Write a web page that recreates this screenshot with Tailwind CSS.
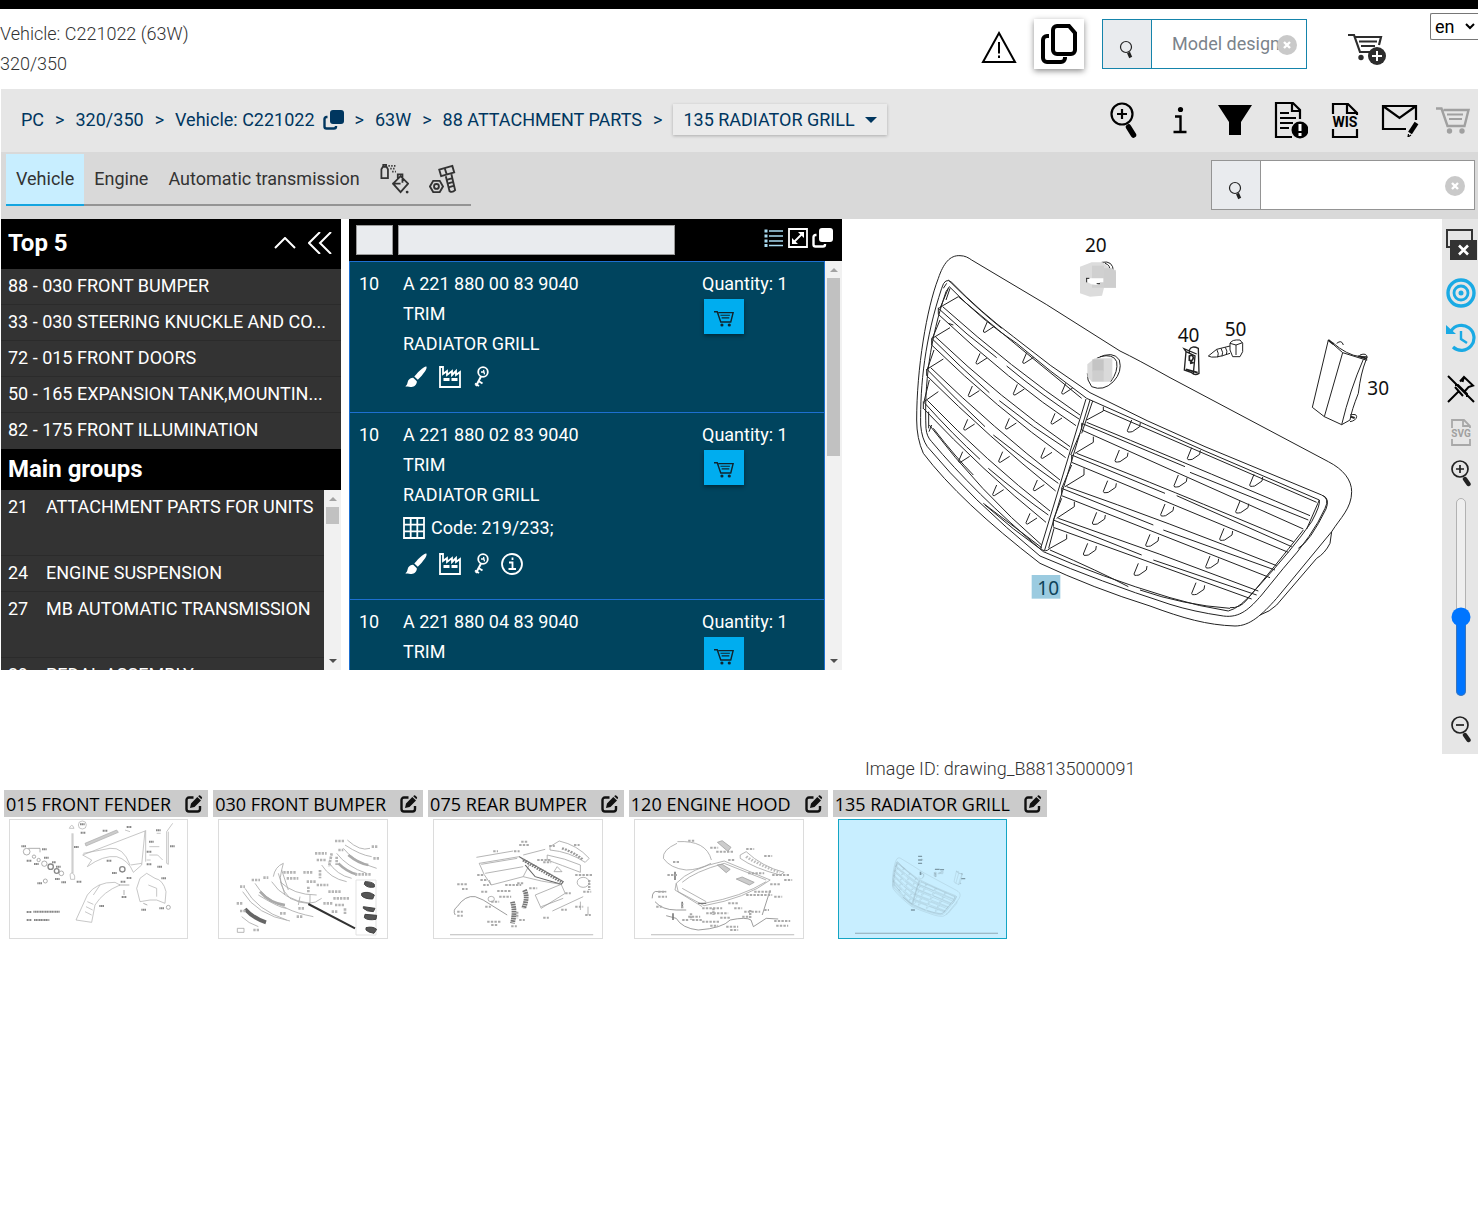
<!DOCTYPE html>
<html lang="en">
<head>
<meta charset="utf-8">
<meta name="viewport" content="width=device-width, initial-scale=1">
<title>Parts catalogue - 135 Radiator grill</title>
<script src="https://cdn.jsdelivr.net/npm/@tailwindcss/browser@4"></script>
</head>
<body class="bg-white text-[#333] text-[18px] leading-[30px] font-['Roboto','Liberation_Sans',sans-serif] overflow-x-hidden">

<svg class="hidden" aria-hidden="true">
  <symbol id="i-search" viewBox="0 0 16 20"><circle cx="7" cy="7" r="5.5" fill="none" stroke="#222" stroke-width="1.2"/><path d="M9.5 12.500l2.200 5" stroke="#222" stroke-width="3.200" /></symbol>
  <symbol id="i-clear" viewBox="0 0 20 20"><circle cx="10" cy="10" r="10" fill="#c9c9c9"/><path d="M7 7l6 6M13 7l-6 6" stroke="#fff" stroke-width="2.400"/></symbol>
  <symbol id="i-cart" viewBox="0 0 34 28"><path d="M0 2.500h5.500l6 17.500h17l4-16H7.500" fill="none" stroke="currentColor" stroke-width="2.400"/><path d="M11 8.500h16M13 13h13" stroke="currentColor" stroke-width="2"/><circle cx="13.500" cy="25" r="2.700" fill="currentColor"/><circle cx="26" cy="25" r="2.700" fill="currentColor"/></symbol>
  <symbol id="i-copy" viewBox="0 0 21 20"><rect x="7" y="0" width="14" height="14" rx="3" fill="currentColor"/><path d="M4.500 7H3.500a2 2 0 0 0-2 2v7.500a2 2 0 0 0 2 2H11a2 2 0 0 0 2-2V16" fill="none" stroke="currentColor" stroke-width="2.400"/></symbol>
  <symbol id="i-brush" viewBox="0 0 22 22"><path d="M21.300.600c.8.800-.2 3.200-1.600 5.200-2 2.900-4.300 5.600-6.900 8L9.300 10.600c2.500-2.900 4.900-5.700 7.600-7.800C18.700 1.200 20.700 0 21.300.6zM8.200 11.700l3.600 3.500c.3 2.700-2 5.500-5.300 5.700-2.500.1-4.800-.2-6.300-.6 2.600-1.400 1.900-3.200 3-5.700 1.100-2 3-3 5-2.900z" fill="#fff"/></symbol>
  <symbol id="i-factory" viewBox="0 0 22 22"><path d="M1 21V1h3v7l4-3v4l5-4v4l4-4v4l4-3v15z" fill="none" stroke="#fff" stroke-width="1.800"/><path d="M4.500 13.500h6M12.500 13.500h6" stroke="#fff" stroke-width="3"/></symbol>
  <symbol id="i-key" viewBox="0 0 16 22"><circle cx="10" cy="6" r="4.800" fill="none" stroke="#fff" stroke-width="1.800"/><path d="M8 6h3.500M10.500 3.800l1 4.500" stroke="#fff" stroke-width="1.300"/><path d="M8 10.500L3 20M5.500 15l4 2.500M2 17.500l4 2.500" stroke="#fff" stroke-width="2"/></symbol>
  <symbol id="i-edit" viewBox="0 0 18 18"><path d="M8.500 2.500H4a2.500 2.500 0 0 0-2.500 2.500v9A2.500 2.500 0 0 0 4 16.500h8.500A2.500 2.500 0 0 0 15 14v-3" fill="none" stroke="#111" stroke-width="2.400"/><path d="M5 13l1-4.500L12.300 2l3.700 3.500-6.500 6.500zM13.200 1.200l1-.9c.6-.5 3.400 1.900 2.900 2.700l-.8 1.200z" fill="#111"/></symbol>
  <symbol id="i-up" viewBox="0 0 8 4"><path d="M0 4l4-4 4 4z" fill="#a3a3a3"/></symbol>
  <symbol id="i-down" viewBox="0 0 8 4"><path d="M0 0l4 4 4-4z" fill="#505050"/></symbol>
</svg>

<div class="h-[9px] bg-black"></div>

<header class="flex h-20 items-start">
  <p class="pt-[10px] font-light">Vehicle: C221022 (63W)<br>320/350</p>
  <div class="ml-auto flex items-start">
    <button aria-label="Warnings" class="mt-[21px] mr-[17px]">
      <svg class="h-[34px] w-9" viewBox="0 0 36 34" fill="none" stroke="#000" stroke-width="2"><path d="M18 3L34 32H2z"/><path d="M18 12v11.500M18 25.500v2.500"/></svg>
    </button>
    <button aria-label="Copy" class="mt-[10px] mr-[18px] flex size-[50px] items-center justify-center bg-white shadow-[0_2px_6px_rgba(0,0,0,0.45)]">
      <svg class="h-10 w-9" viewBox="0 0 36 40" fill="none" stroke="#000" stroke-width="4"><path d="M16 2h12l6 7v17a4 4 0 0 1-4 4H16a4 4 0 0 1-4-4V6a4 4 0 0 1 4-4z"/><path d="M8 12H6a4 4 0 0 0-4 4v18a4 4 0 0 0 4 4h14a4 4 0 0 0 4-4v-1"/></svg>
    </button>
    <form class="relative mt-[10px] mr-[41px] flex h-[50px] w-[205px] border border-[#1584ab]">
      <button type="button" aria-label="Search model" class="flex w-[49px] items-center justify-center border-r border-[#1584ab] bg-[#e9ebee] pt-3"><svg class="h-5 w-4"><use href="#i-search"/></svg></button>
      <input aria-label="Model designation" placeholder="Model designation" class="min-w-0 flex-1 bg-white pr-6 pl-5 outline-none placeholder:text-[#7b838b]">
      <button type="button" aria-label="Clear" class="absolute top-[15px] right-[9px]"><svg class="size-5"><use href="#i-clear"/></svg></button>
    </form>
    <button aria-label="Add to cart" class="mt-6 mr-11">
      <svg class="h-8 w-[38px]" viewBox="0 0 38 32" fill="none" stroke="#2d2d2d" stroke-width="2.200"><path d="M0 2h6l6 17h12M7.500 4H33l-2 8"/><path d="M11 8.500h18M13 13h14" stroke-width="1.800"/><circle cx="13" cy="24.500" r="2.700" fill="#2d2d2d" stroke="none"/><circle cx="29" cy="23" r="9" fill="#2d2d2d" stroke="none"/><path d="M29 18v10M24 23h10" stroke="#fff" stroke-width="2"/></svg>
    </button>
    <select aria-label="Language" class="mt-1 h-[27px] w-12 rounded-l-xs border border-r-0 border-[#767676] bg-white leading-6 text-black"><option>en</option></select>
  </div>
</header>

<div class="pl-px">
  <nav aria-label="Breadcrumb" class="flex h-[63px] items-center bg-[#e6e6e6] pb-[2px] text-[#00365f]">
    <ol class="flex items-center gap-[11px] pl-5 whitespace-nowrap">
      <li><a href="#">PC</a></li><li aria-hidden="true">&gt;</li>
      <li><a href="#">320/350</a></li><li aria-hidden="true">&gt;</li>
      <li class="flex items-center gap-2"><a href="#">Vehicle: C221022</a><button aria-label="Copy vehicle"><svg class="h-5 w-[21px]"><use href="#i-copy"/></svg></button></li><li aria-hidden="true">&gt;</li>
      <li><a href="#">63W</a></li><li aria-hidden="true">&gt;</li>
      <li><a href="#">88 ATTACHMENT PARTS</a></li><li aria-hidden="true">&gt;</li>
      <li><button class="flex h-[31px] items-center gap-[10px] bg-[#ebebeb] px-[10px] shadow-[0_1px_3px_rgba(0,0,0,0.25)]">135 RADIATOR GRILL <svg class="h-[6px] w-3" viewBox="0 0 12 6"><path d="M0 0h12L6 6z" fill="#00365f"/></svg></button></li>
    </ol>
    <div class="ml-auto flex items-center text-black">
      <button aria-label="Zoom" class="flex w-[55px] justify-center"><svg class="size-9" viewBox="0 0 36 36" fill="none" stroke="#000"><circle cx="15" cy="12" r="10.500" stroke-width="2.200"/><path d="M15 7v10M10 12h10" stroke-width="2.200"/><path d="M21.500 25l5 8" stroke-width="5.500" stroke-linecap="round"/></svg></button>
      <button aria-label="Information" class="flex w-[55px] justify-center"><svg class="h-7 w-4" viewBox="0 0 16 28"><circle cx="8.500" cy="3.500" r="2.600"/><path d="M3 10.500h5.500V26M1.500 26h13" fill="none" stroke="#000" stroke-width="2.400"/></svg></button>
      <button aria-label="Filter" class="flex w-[55px] justify-center"><svg class="h-[30px] w-9" viewBox="0 0 36 30"><path d="M1 0h34L24 17v13H12V17z"/></svg></button>
      <button aria-label="Notes" class="flex w-[55px] justify-center"><svg class="h-[38px] w-9" viewBox="0 0 36 38" fill="none" stroke="#000" stroke-width="2.200"><path d="M20 36H4V2h17l7 7v9M20 2v8h8"/><path d="M8 12h9M8 17h16M8 22h13M8 27h9"/><circle cx="28" cy="29" r="8.500" fill="#000" stroke="none"/><path d="M28 23v7M28 32v3" stroke="#fff" stroke-width="3"/></svg></button>
      <button aria-label="WIS" class="flex w-[55px] justify-center"><svg class="h-9 w-[30px]" viewBox="0 0 30 36" fill="none" stroke="#000" stroke-width="2.200"><path d="M3 12V2h15l9 9v2M17 2v9h10M3 27v8h24v-8"/><text x="15" y="25" text-anchor="middle" font-family="Roboto" font-size="14" font-weight="700" fill="#000" stroke="none">WIS</text></svg></button>
      <button aria-label="Message" class="flex w-[55px] justify-center"><svg class="h-[34px] w-[38px]" viewBox="0 0 38 34" fill="none" stroke="#000" stroke-width="2.200"><path d="M25 26H2V3h33v14M2 3l16.500 12L35 3"/><path d="M35.500 20l-6.500 10" stroke-width="4.500"/><path d="M27.500 31l-.5 3 3-2" stroke-width="1.200"/></svg></button>
      <button aria-label="Cart" class="flex w-[51px] justify-center text-[#a0a0a0]"><svg class="h-7 w-[34px]"><use href="#i-cart"/></svg></button>
    </div>
  </nav>

  <div class="flex h-[67px] items-start bg-[#d9d9d9]">
    <div class="mt-[2px] ml-[5px] flex h-[52px] border-b-2 border-[#949494]">
      <button class="-mb-[2px] border-b-2 border-[#14a5e0] bg-[#c8eeff] px-[10px]">Vehicle</button>
      <button class="px-[10px]">Engine</button>
      <button class="px-[10px]">Automatic transmission</button>
      <button aria-label="Paint and supplies" class="px-[10px]"><svg class="h-[30px] w-[29px]" viewBox="0 0 31 32" fill="none" stroke="#333" stroke-width="1.900"><path d="M1.500 5.500L3 3h4l1.500 2.500V15h-7zM3.500 3V1h3v2M14 21l8-8 8 8-8 9zM19 16V11h5v9M13 21h9"/><path d="M9 2h8M11 5h6M13 8h4" stroke-dasharray="1.500 1.500"/><circle cx="29" cy="30" r="1.500" fill="#333" stroke="none"/></svg></button>
      <button aria-label="Standard parts" class="pr-[14px] pl-[10px]"><svg class="h-[30px] w-7" viewBox="0 0 30 32" fill="none" stroke="#333" stroke-width="2"><path d="M1 24l3.500-6h7l3.500 6-3.500 6h-7z"/><circle cx="8" cy="24" r="2.600"/><path d="M11 6l14-4 2 7-14 4zM17 5l2 6M18 13l4 16q3 2 6-1l-4-17M19 17l6-2M20 21l6-2M21 25l6-2"/></svg></button>
    </div>
    <form class="relative mt-2 mr-[3px] ml-auto flex h-[50px] w-[264px] border border-[#949494]">
      <button type="button" aria-label="Search" class="flex w-[49px] items-center justify-center border-r border-[#949494] bg-[#e9ebee] pt-3"><svg class="h-5 w-4"><use href="#i-search"/></svg></button>
      <input aria-label="Search parts" class="min-w-0 flex-1 bg-white pr-8 pl-5 outline-none">
      <button type="button" aria-label="Clear" class="absolute top-[15px] right-[9px]"><svg class="size-5"><use href="#i-clear"/></svg></button>
    </form>
  </div>
</div>

<main>
  <div class="flex items-start pl-px">
    <aside class="mr-2 flex h-[451px] w-[340px] shrink-0 flex-col bg-[#333] text-white">
      <div class="flex h-[50px] items-center bg-black pr-[9px] pb-[2px] pl-[7px] text-[24px] font-bold">
        <h2>Top 5</h2>
        <button aria-label="Collapse" class="mr-3 ml-auto"><svg class="h-3 w-[22px]" viewBox="0 0 22 12" fill="none" stroke="#fff" stroke-width="2"><path d="M1 11L11 1l10 10"/></svg></button>
        <button aria-label="Hide panel"><svg class="h-[22px] w-6" viewBox="0 0 24 22" fill="none" stroke="#fff" stroke-width="2"><path d="M12 0L1 11l11 11M23 0L12 11l11 11"/></svg></button>
      </div>
      <ul class="divide-y divide-[#2b2b2b] whitespace-nowrap">
        <li class="h-9 px-[7px] leading-[34px]"><a href="#">88 - 030 FRONT BUMPER</a></li>
        <li class="h-9 px-[7px] leading-[34px]"><a href="#">33 - 030 STEERING KNUCKLE AND CO...</a></li>
        <li class="h-9 px-[7px] leading-[34px]"><a href="#">72 - 015 FRONT DOORS</a></li>
        <li class="h-9 px-[7px] leading-[34px]"><a href="#">50 - 165 EXPANSION TANK,MOUNTIN...</a></li>
        <li class="h-9 px-[7px] leading-[34px]"><a href="#">82 - 175 FRONT ILLUMINATION</a></li>
      </ul>
      <h2 class="flex h-[41px] shrink-0 items-center bg-black px-[7px] pb-[2px] text-[24px] font-bold">Main groups</h2>
      <div class="flex min-h-0 flex-1">
        <ul class="flex-1 divide-y divide-[#2b2b2b] overflow-hidden leading-[34px]">
          <li class="flex h-[66px] px-[7px]"><span class="w-[38px]">21</span><a href="#">ATTACHMENT PARTS FOR UNITS</a></li>
          <li class="flex h-9 px-[7px]"><span class="w-[38px]">24</span><a href="#">ENGINE SUSPENSION</a></li>
          <li class="flex h-[66px] px-[7px]"><span class="w-[38px]">27</span><a href="#">MB AUTOMATIC TRANSMISSION</a></li>
          <li class="flex h-9 px-[7px]"><span class="w-[38px]">29</span><a href="#">PEDAL ASSEMBLY</a></li>
        </ul>
        <div class="flex w-[17px] flex-col items-center bg-[#f1f1f1] py-[7px]" aria-hidden="true">
          <svg class="h-1 w-2"><use href="#i-up"/></svg>
          <div class="mt-[6px] h-[17px] w-[13px] bg-[#c1c1c1]"></div>
          <svg class="mt-auto h-1 w-2"><use href="#i-down"/></svg>
        </div>
      </div>
    </aside>

    <section aria-label="Parts" class="flex h-[451px] w-[493px] shrink-0 flex-col">
      <div class="flex h-[42px] shrink-0 items-center bg-black pr-[9px] pl-[7px]">
        <input aria-label="Item number" class="h-[30px] w-[37px] border border-[#999] bg-[#e9ebee]">
        <input aria-label="Filter parts" class="ml-[5px] h-[30px] w-[277px] border border-[#999] bg-[#e9ebee]">
        <div class="ml-auto flex items-center gap-1 pb-1 text-white">
          <button aria-label="List view"><svg class="h-[18px] w-5" viewBox="0 0 20 18" stroke="#a9dcf2" stroke-width="1.500"><path d="M5 2h14M5 7h14M5 12h14M5 16.500h14"/><path d="M.5 2h3M.5 7h3M.5 12h3M.5 16.500h3" stroke-width="3"/></svg></button>
          <button aria-label="Expand"><svg class="h-5 w-5" viewBox="0 0 20 20" fill="none" stroke="#fff" stroke-width="1.800"><path d="M1 1h18v18H1zM5 15L15 5"/><path d="M10 4h6v6zM4 10v6h6z" fill="#fff" stroke="none"/></svg></button>
          <button aria-label="Copy list"><svg class="h-5 w-[21px]"><use href="#i-copy"/></svg></button>
        </div>
      </div>
      <div class="flex min-h-0 flex-1">
        <ul class="flex-1 overflow-hidden border-x border-[#1d6fd0] bg-[#00445e] text-white">
          <li class="flex border-t border-[#1d6fd0] pt-[7px] pb-[17px]">
            <span class="w-[53px] pl-[9px]">10</span>
            <div class="flex-1"><p>A 221 880 00 83 9040</p><p>TRIM</p><p>RADIATOR GRILL</p>
              <div class="flex h-9 items-center gap-3 pl-[2px]"><svg class="size-[22px]"><use href="#i-brush"/></svg><svg class="size-[22px]"><use href="#i-factory"/></svg><svg class="h-[22px] w-4"><use href="#i-key"/></svg></div>
            </div>
            <div class="w-[122px]"><p>Quantity: 1</p><button aria-label="Add to cart" class="ml-[2px] flex h-[35px] w-10 items-center justify-center bg-[#00adef] pt-1 text-[#10242e] shadow-[0_2px_4px_rgba(0,0,0,0.4)]"><svg class="h-[17px] w-5"><use href="#i-cart"/></svg></button></div>
          </li>
          <li class="flex border-t border-[#1d6fd0] pt-[7px] pb-[17px]">
            <span class="w-[53px] pl-[9px]">10</span>
            <div class="flex-1"><p>A 221 880 02 83 9040</p><p>TRIM</p><p>RADIATOR GRILL</p>
              <p class="flex h-9 items-center gap-[6px]"><svg class="size-[22px]" viewBox="0 0 22 22" fill="none" stroke="#fff" stroke-width="1.800"><path d="M1 1h20v20H1zM7.700 1v20M14.300 1v20M1 7.700h20M1 14.300h20"/></svg>Code: 219/233;</p>
              <div class="flex h-9 items-center gap-3 pl-[2px]"><svg class="size-[22px]"><use href="#i-brush"/></svg><svg class="size-[22px]"><use href="#i-factory"/></svg><svg class="h-[22px] w-4"><use href="#i-key"/></svg><svg class="size-[22px]" viewBox="0 0 22 22" fill="none" stroke="#fff" stroke-width="1.800"><circle cx="11" cy="11" r="10"/><path d="M8 9.500h3.500V16M7.500 16H15M11.500 4.500V7"/></svg></div>
            </div>
            <div class="w-[122px]"><p>Quantity: 1</p><button aria-label="Add to cart" class="ml-[2px] flex h-[35px] w-10 items-center justify-center bg-[#00adef] pt-1 text-[#10242e] shadow-[0_2px_4px_rgba(0,0,0,0.4)]"><svg class="h-[17px] w-5"><use href="#i-cart"/></svg></button></div>
          </li>
          <li class="flex border-t border-[#1d6fd0] pt-[7px] pb-[17px]">
            <span class="w-[53px] pl-[9px]">10</span>
            <div class="flex-1"><p>A 221 880 04 83 9040</p><p>TRIM</p></div>
            <div class="w-[122px]"><p>Quantity: 1</p><button aria-label="Add to cart" class="ml-[2px] flex h-[35px] w-10 items-center justify-center bg-[#00adef] pt-1 text-[#10242e]"><svg class="h-[17px] w-5"><use href="#i-cart"/></svg></button></div>
          </li>
        </ul>
        <div class="flex w-[17px] flex-col items-center bg-[#f1f1f1] py-[7px]" aria-hidden="true">
          <svg class="h-1 w-2"><use href="#i-up"/></svg>
          <div class="mt-[6px] h-[178px] w-[13px] bg-[#c1c1c1]"></div>
          <svg class="mt-auto h-1 w-2"><use href="#i-down"/></svg>
        </div>
      </div>
    </section>

    <figure class="min-w-0 flex-1">
      <svg class="h-[535px] w-full" viewBox="-174 -18 1800 1605" role="img" aria-label="Exploded drawing of the radiator grill">
        <defs>
          <path id="vl" d="M0 0l-12 28q0 5 5 4l28-18"/>
          <path id="vr" d="M0 0l-13 32q0 6 8 4l7-1 22-15 2-12"/>
        </defs>
        <g id="grille" fill="none" stroke="#222" stroke-width="3">
          <path d="M50 585C50 430 80 250 115 160C130 115 150 90 180 92C195 92 205 98 215 105Q440 235 660 378Q710 402 810 458L1285 710C1330 733 1355 765 1355 800C1355 850 1320 880 1295 920L1130 1120C1085 1170 1050 1203 1005 1203C920 1200 850 1180 750 1143Q580 1090 420 1015Q180 830 70 685Q50 640 50 585"/>
          <path d="M1295 920l-5 35q-15 30-40 45L1130 1140q-20 20-50 30"/>
          <path d="M62 600C60 480 75 340 125 190Q135 155 155 172Q240 260 340 335Q450 425 570 503Q740 590 915 665L1265 810Q1290 820 1275 850Q1240 930 1150 1030L1085 1110C1050 1150 1020 1180 970 1173Q880 1160 810 1138Q600 1070 420 993Q210 820 82 665Q65 640 62 600"/>
          <path d="M78 610C72 480 90 340 138 200L148 185Q250 290 350 355Q450 440 560 520Q740 600 915 678L1258 825Q1262 840 1235 890Q1180 970 1070 1090Q1020 1150 985 1158Q900 1145 810 1118Q600 1055 430 980Q220 800 95 650Q80 635 78 610"/>
          <path d="M145 165Q230 250 305 310M140 175l-10 15M1270 812q20 10 8 40Q1230 950 1195 970"/>
          <path d="M1258 825L1220 912M1210 915Q1120 1030 1040 1125Q1020 1150 990 1148"/>
          <!-- left slats -->
          <path d="M145 190L120 250M120 285L97 340M102 375L82 432M88 465L72 530M86 560V610"/>
          <path d="M128 245Q335 430 540 570M115 250Q200 330 290 398M320 423Q430 515 537 582M115 268Q330 470 528 602M115 248v20M118 248L175 215"/>
          <path d="M106 335Q300 520 510 665M95 340Q180 425 268 503M298 527Q400 610 505 675M95 360Q290 550 497 698M95 340v20M97 340L150 308"/>
          <path d="M92 428Q280 610 480 765M80 432Q170 525 255 605M280 630Q380 710 475 775M80 452Q270 640 467 798M80 432v20M82 432L130 402"/>
          <path d="M82 526Q260 710 450 858M70 530Q160 630 240 703M265 730Q360 810 445 870M70 550Q250 740 438 892M70 530v22M72 530L115 500"/>
          <path d="M88 600Q240 800 425 960M95 600l-8 20M100 610Q170 700 220 750M255 840Q340 915 425 975M250 835L425 968"/>
          <path d="M150 190l-12 35M175 215Q360 370 545 520M160 300l-15-5"/>
          <use href="#vl" x="262" y="290"/><use href="#vl" x="380" y="383"/><use href="#vl" x="497" y="475"/>
          <use href="#vl" x="240" y="385"/><use href="#vl" x="352" y="478"/><use href="#vl" x="465" y="565"/>
          <use href="#vl" x="217" y="483"/><use href="#vl" x="328" y="580"/><use href="#vl" x="435" y="668"/>
          <use href="#vl" x="203" y="583"/><use href="#vl" x="308" y="680"/><use href="#vl" x="412" y="765"/>
          <use href="#vl" x="188" y="680"/><use href="#vl" x="290" y="780"/><use href="#vl" x="390" y="865"/>
          <!-- centre bar -->
          <path d="M558 522L422 970Q435 985 450 970M570 525L434 975M578 528L545 625M540 625L512 690M515 720L485 790M485 820L460 885M462 910L446 970" />
          <!-- right slats -->
          <path d="M560 592Q800 690 1230 872M545 595L855 725M870 742L1225 885M545 615L1210 912M545 595v20M560 585L610 558V545M610 555L1250 832"/>
          <path d="M530 685Q800 790 1180 950M515 690L795 805M830 812L1175 965M515 712L1165 982M515 690v20M525 685L580 652V635"/>
          <path d="M500 785Q800 890 1130 1022M485 790L760 900M790 915L1125 1035M485 812L1110 1058M485 790v20M495 785L552 750V730"/>
          <path d="M475 880Q780 985 1075 1098M460 885L725 990M760 1005L1070 1110M460 907L1055 1122M460 885v20M470 880L523 845V830"/>
          <path d="M450 970L500 942V928M450 975Q600 1040 685 1085M720 1095Q850 1140 990 1150"/>
          <use href="#vr" x="695" y="585"/><use href="#vr" x="875" y="668"/><use href="#vr" x="1062" y="748"/>
          <use href="#vr" x="658" y="675"/><use href="#vr" x="835" y="750"/><use href="#vr" x="1020" y="828"/>
          <use href="#vr" x="623" y="767"/><use href="#vr" x="795" y="837"/><use href="#vr" x="972" y="910"/>
          <use href="#vr" x="590" y="862"/><use href="#vr" x="750" y="928"/><use href="#vr" x="930" y="993"/>
          <use href="#vr" x="563" y="955"/><use href="#vr" x="715" y="1015"/><use href="#vr" x="888" y="1073"/>
          <!-- badge seats -->
          <path d="M590 400Q640 375 658 405Q668 440 640 470Q610 500 575 485Q560 465 562 445M600 395Q640 385 650 410Q655 440 632 470M605 112Q640 105 640 140M615 115Q632 120 630 140"/>
          <!-- clip, bolt and side trim -->
          <g transform="translate(750 225)">
            <path d="M118 150Q125 135 145 145L147 220Q135 228 125 218L103 210L108 155L102 146L140 162M108 155L135 168L130 220M118 150V158" stroke-width="4"/>
            <path d="M118 168q10-5 12 5q-2 12-12 8zM120 184l8 4-8 2M108 208l35 10" stroke-width="5"/>
            <path d="M175 168L200 148L240 138M175 168Q190 178 240 160M200 148q8 12 3 24M213 145q8 12 3 24M226 142q8 12 3 22M240 130Q245 118 270 120L278 130V155L270 170H248Q236 150 240 130M240 130L258 135L278 128M258 135V165"/>
            <path d="M535 120L487 322L523 350L575 374L600 360Q605 330 625 280Q632 220 648 180L578 158L535 120M578 158L523 350M640 178Q600 270 575 374M548 128Q590 165 630 170L650 170V182M560 130q15-12 20 5M630 165q20-8 22 8M600 345q20-5 20 5q-2 12-20 15" />
            <path d="M535 120l15 12M625 168l25 8M602 350l12 4" stroke-width="6"/>
          </g>
        </g>
        <g>
          <path d="M540 125L575 112H608L632 132 648 135V188H612L606 212 570 215 540 205z" fill="#dcdcdc"/><path d="M576 122h36v66h-36z" fill="#d0d0d0"/><path d="M612 130h24l12 10v48h-36z" fill="#cecece"/>
          <path d="M560 160h50v12h-10l-8 8-18-2-14-8z" fill="#fff"/><path d="M558 160h10M560 160v12M590 176h10" fill="none" stroke="#222" stroke-width="3"/>
          <path d="M562 418l22-18h53v60l-8 10h-54l-13-16z" fill="#dadada"/><path d="M577 403h34v36h-34z" fill="#c4c4c4"/><path d="M577 436h34v33h-34z" fill="#cecece"/>
          <path d="M395 1050h86v71h-86z" fill="#9bcbe0"/>
        </g>
        <g font-family="'Noto Sans','Open Sans',sans-serif" font-size="57" fill="#111">
          <text x="555" y="82">20</text><text x="833" y="350">40</text><text x="974" y="334">50</text><text x="1402" y="511">30</text><text x="412" y="1110" fill="#0e4258">10</text>
        </g>
      </svg>
      <figcaption class="pl-[23px] font-light">Image ID: drawing_B88135000091</figcaption>
    </figure>

    <div role="toolbar" aria-label="Drawing tools" class="flex h-[535px] w-9 shrink-0 flex-col items-center bg-[#e6e6e6] pt-[10px] pl-[2px]">
      <button aria-label="Close window"><svg class="h-[31px] w-[31px]" viewBox="0 0 31 31"><path d="M1 1h25v17H1z" fill="none" stroke="#333" stroke-width="2"/><path d="M4 11h27v20H4z" fill="#333"/><path d="M13 16.500l9 9M22 16.500l-9 9" stroke="#fff" stroke-width="2.600"/></svg></button>
      <button aria-label="Target" class="mt-[18px]"><svg class="size-[30px]" viewBox="0 0 30 30" fill="none" stroke="#1aaae4"><circle cx="15" cy="15" r="13" stroke-width="3.400"/><circle cx="15" cy="15" r="7" stroke-width="2.800"/><circle cx="15" cy="15" r="2.500" fill="#1aaae4" stroke="none"/></svg></button>
      <button aria-label="History" class="mt-[15px]"><svg class="size-[30px]" viewBox="0 0 30 30" fill="none" stroke="#1aaae4" stroke-width="3.200"><path d="M5 8A12.500 12.500 0 1 1 7 24"/><path d="M15 8v8l6 4" stroke-width="2.400"/><path d="M0 2v9h10z" fill="#1aaae4" stroke="none"/></svg></button>
      <button aria-label="Unpin" class="mt-[22px]"><svg class="size-7" viewBox="0 0 28 28" fill="none" stroke="#000" stroke-width="2"><path d="M1 1l26 26M1 27L12 16M8 10l3 0 9 9v3M13 6.500L17 2l9 8.500-4.500 1.500L18 16M17 2l-1.500 5M8 12l8 9"/></svg></button>
      <button aria-label="SVG" class="mt-4"><svg class="h-[27px] w-[22px]" viewBox="0 0 22 27" fill="none" stroke="#a8a8a8" stroke-width="1.800"><path d="M2 9V1h12l6 6v2M13 1v6h7M2 20v6h18v-6"/><text x="11" y="18" text-anchor="middle" font-family="Roboto" font-size="10" font-weight="700" fill="#a0a0a0" stroke="none">SVG</text></svg></button>
      <button aria-label="Zoom in" class="mt-[13px]"><svg class="h-[28px] w-[22px]" viewBox="0 0 22 28" fill="none" stroke="#222" stroke-width="1.700"><circle cx="10" cy="10" r="8"/><path d="M10 6v8M6 10h8"/><path d="M15 20l3.500 5" stroke-width="4.400" stroke-linecap="round"/></svg></button>
      <input type="range" aria-label="Zoom level" value="39" class="mt-2 h-[160px] w-4 accent-[#0075ff] [direction:rtl] [writing-mode:vertical-lr] [zoom:1.25]">
      <button aria-label="Zoom out" class="mt-[18px]"><svg class="h-[28px] w-[22px]" viewBox="0 0 22 28" fill="none" stroke="#222" stroke-width="1.700"><circle cx="10" cy="10" r="8"/><path d="M6 10h8"/><path d="M15 20l3.500 5" stroke-width="4.400" stroke-linecap="round"/></svg></button>
    </div>
  </div>

  <ul class="mt-[6px] flex gap-[5px] pl-1 font-['Open_Sans','Noto_Sans',sans-serif] text-black">
    <li>
      <div class="flex h-[27px] items-center justify-between gap-[14px] bg-[#cbcbcb] pr-[5px] pl-[2px] whitespace-nowrap">015 FRONT FENDER<button aria-label="Edit 015"><svg class="size-[18px]"><use href="#i-edit"/></svg></button></div>
      <a href="#" aria-label="015 Front fender" class="mt-[2px] ml-[5px] block h-[120px] w-[179px] border border-[#dcdcdc]">
        <svg class="size-full" viewBox="30 105 531 354" fill="none" stroke="#aaa" stroke-width="2">
          <path d="M216 145V265M219 145V265M208 130q8-18 14 0zM210 268q8-10 14 5v10h-12zM235 120a12 12 0 1 0 24 0a12 12 0 1 0-24 0"/>
          <path d="M248 210L435 138L425 240L400 262Q385 225 350 215Q310 210 262 245L275 225zM250 205L330 190Q370 185 390 240M437 135V230M392 240L425 235"/>
          <path d="M255 175L350 135L355 142L258 183z" fill="#ccc"/>
          <path d="M228 405L262 330Q290 290 345 292L360 300Q310 320 285 360L275 412zM262 350L280 358M258 365L278 375M255 380L275 390M300 300L280 330"/>
          <path d="M420 280L440 265L465 280Q490 285 498 320L495 355L470 345L450 345L420 350L410 310zM445 300L470 310V335"/>
          <path d="M518 115L500 140V235L505 238V140M470 145h12M448 185h30M448 210h25l15 15M375 135l15 5M440 225h12"/>
          <g stroke="#888"><circle cx="80" cy="200" r="10"/><circle cx="102" cy="215" r="5"/><circle cx="116" cy="225" r="5"/><circle cx="133" cy="236" r="8"/><circle cx="152" cy="245" r="8" stroke-width="4"/><circle cx="170" cy="258" r="7" stroke-width="4"/><circle cx="184" cy="265" r="7"/><circle cx="136" cy="288" r="6"/><circle cx="367" cy="253" r="8" stroke-width="4"/><circle cx="505" cy="367" r="6"/><path d="M85 190h35v12M358 300h30M372 315v15M430 355l12 5"/></g>
          <path stroke="#888" stroke-width="6" stroke-dasharray="4 1" d="M64 184h14M126 193h14M80 227h14M102 237h14M132 218h14M156 232h12M168 245h14M165 282h14M184 292h14M230 290h14M112 295h14M240 118h14M242 143h14M308 137h14M380 126h14M222 186h14M320 227h14M336 264h14M380 279h14M365 336h14M362 290h14M298 363h14M424 374h14M478 370h14M484 280h14M468 136h14M447 170h14M440 200h14M440 238h14M472 245h14M510 184h14M80 381h14M100 380h80M80 405h14M102 405h46"/>
        </svg>
      </a>
    </li>
    <li>
      <div class="flex h-[27px] items-center justify-between gap-[14px] bg-[#cbcbcb] pr-[5px] pl-[2px] whitespace-nowrap">030 FRONT BUMPER<button aria-label="Edit 030"><svg class="size-[18px]"><use href="#i-edit"/></svg></button></div>
      <a href="#" aria-label="030 Front bumper" class="mt-[2px] ml-[5px] block h-[120px] w-[170px] border border-[#dcdcdc]">
        <svg class="size-full" viewBox="657 105 504 354" fill="none" stroke="#aaa" stroke-width="2.500">
          <path d="M820 275Q825 245 850 235L845 255Q830 300 870 340Q930 370 965 340M815 290Q850 345 930 355M840 290Q880 330 950 330M765 295Q790 340 860 370Q840 370 775 330M1035 180Q1080 210 1115 215M1030 190Q1060 230 1130 250M1010 205Q1040 245 1100 265M985 230Q1010 270 1055 280M965 240Q990 280 1040 290M940 395Q890 385 860 370"/>
          <path d="M735 310Q770 375 860 405M728 320Q770 390 870 408M1042 165Q1080 200 1110 190M845 255l20 60M835 265l20 65M900 335l-5 25M930 330v25"/>
          <path d="M780 320Q810 355 855 360M1045 210Q1075 235 1105 240M1015 235Q1040 260 1070 268" stroke-width="8"/>
          <path d="M735 372Q760 400 798 412" stroke="#666" stroke-width="12"/>
          <path d="M725 395Q745 415 775 425M712 430h20v12h-20z"/>
          <path d="M1068 285h60v165h-60z" stroke="#ddd"/><path d="M925 357L1065 430" stroke="#333" stroke-width="6"/>
          <path d="M1095 290q20 0 28 8v8q-20 4-30-8zM1085 325q20-8 38 5l-5 12q-25 0-33-10zM1090 365l35 5-5 10q-20 0-30-10zM1095 388l35 3-2 12q-25 4-35-5zM1098 428q20-5 32 5l-8 12q-18-3-24-10z" stroke="#444" stroke-width="3" fill="#555"/>
          <path d="M1005 168h30M1115 185h20M945 205h35M950 225h30M1015 195h15M1120 220h20M1065 268h50M910 262h30M960 255v25M850 262h40M860 280h35M920 290h30M925 305v20M950 300h35M985 320h40M1000 340h50M970 355h30M1005 360h30M995 380h20M1035 370v20M755 285h25M790 278h15M720 305h15M710 355h20M720 378h20M895 370h20M840 385h20M890 395h20M760 435h20M995 205l-8 40M1010 215v25" stroke-width="8" stroke-dasharray="7 3" stroke="#b5b5b5"/>
        </svg>
      </a>
    </li>
    <li>
      <div class="flex h-[27px] items-center justify-between gap-[14px] bg-[#cbcbcb] pr-[5px] pl-[2px] whitespace-nowrap">075 REAR BUMPER<button aria-label="Edit 075"><svg class="size-[18px]"><use href="#i-edit"/></svg></button></div>
      <a href="#" aria-label="075 Rear bumper" class="mt-[2px] ml-[5px] block h-[120px] w-[170px] border border-[#dcdcdc]">
        <svg class="size-full" viewBox="22 105 420 354" preserveAspectRatio="none" fill="none" stroke="#999" stroke-width="2">
          <path d="M135 235L235 215L260 240L245 275L165 300Q145 270 135 235M140 238L230 220M150 265L245 245M165 300L160 285M128 217L220 198M245 210L300 193"/>
          <path d="M235 215L345 290L340 298L275 275L250 240" stroke="#666" stroke-width="3"/><path d="M245 225L340 290" stroke="#777" stroke-width="9" stroke-dasharray="4 3"/>
          <path d="M245 275Q290 290 340 298L350 325L290 370L275 330L340 298M290 365L345 340M318 378L395 335M312 185L335 168Q380 180 410 220L400 232Q360 200 312 195zM305 210Q350 220 388 240V262Q340 240 305 225z"/>
          <path d="M342 190Q370 200 395 225" stroke-width="7" stroke-dasharray="5 3"/>
          <path d="M75 390Q68 375 80 365Q100 330 125 335L145 345L205 390" stroke="#777"/>
          <path d="M248 315q10 20-2 55M218 350q8 30 0 65" stroke="#777" stroke-width="12" stroke-dasharray="5 2"/>
          <circle cx="395" cy="292" r="15"/><circle cx="165" cy="342" r="8"/><path d="M330 245l-8 15h20zM388 350v25M407 365v25"/>
          <path d="M235 180h25M240 170h18M170 199h12M222 199h14M310 183h14M372 180h14M280 225h35M295 232h20M130 270h18M138 285h16M145 300h14M80 298h25M92 312h14M180 318h35M200 300h40M185 335h30M260 310h20M230 295h16M165 350h20M140 320h15M80 380h14M80 392h14M155 410h35M165 420h15M215 424h14M235 405h14M295 398h14M340 374h14M375 365h20M400 390h14M375 270h45M410 285v30M395 320h20M150 365h14M350 325h14M230 380v20" stroke-width="6" stroke-dasharray="6 3" stroke="#aaa"/>
          <path d="M62 449H420" stroke="#bbb" stroke-width="3"/>
        </svg>
      </a>
    </li>
    <li>
      <div class="flex h-[27px] items-center justify-between gap-[14px] bg-[#cbcbcb] pr-[5px] pl-[2px] whitespace-nowrap">120 ENGINE HOOD<button aria-label="Edit 120"><svg class="size-[18px]"><use href="#i-edit"/></svg></button></div>
      <a href="#" aria-label="120 Engine hood" class="mt-[2px] ml-[5px] block h-[120px] w-[170px] border border-[#dcdcdc]">
        <svg class="size-full" viewBox="522 105 420 354" preserveAspectRatio="none" fill="none" stroke="#999" stroke-width="2">
          <path d="M627 175Q590 195 593 220Q610 250 650 255Q680 255 712 235M628 170Q700 165 713 225"/>
          <path d="M625 295Q660 250 745 228L860 285Q800 340 695 362L630 320zM640 292Q670 260 745 235L850 285M695 355Q790 335 850 290M625 295L622 315L690 365M640 310L700 350"/>
          <path d="M728 172l12-5 22 20-8 12zM728 240l12-2 20 15-10 10zM775 282l15-6 30 16-12 8z" fill="#ccc"/>
          <path d="M785 210L800 200Q840 245 895 262L885 270Q820 250 785 220z"/><path d="M800 215Q840 245 885 262" stroke-width="8" stroke-dasharray="4 4" stroke="#bbb"/>
          <path d="M565 340q0-25 15-20h20M572 350Q590 375 625 375H650M600 392L625 400Q640 430 680 435Q740 430 760 405Q800 395 812 405L818 425L850 400L880 402M860 315L840 390" stroke="#777"/>
          <path d="M622 260v25M617 385v20M680 355h20M640 350v15" stroke="#777" stroke-width="4"/>
          <path d="M655 167h18M710 188h20M725 200h45M755 225h18M800 192h20M845 213h20M617 231h16M603 270h25M805 265h40M865 270h45M895 285h20M860 298h25M800 330h65M820 320h45M870 335h20M580 320h20M580 335h22M575 365h14M640 355v15M690 370h50M700 385h55M655 395h30M665 405h25M690 410h45M640 405h15M710 422h20M735 398h25M755 355h25M770 370h20M795 380h40M790 395h20M750 425h30M760 435h20M870 408h40M875 422h30M845 375h12M718 370v20M662 385v20M810 375v25" stroke-width="6" stroke-dasharray="6 3" stroke="#aaa"/>
          <path d="M562 449H920" stroke="#bbb" stroke-width="3"/>
        </svg>
      </a>
    </li>
    <li>
      <div class="flex h-[27px] items-center justify-between gap-[14px] bg-[#cbcbcb] pr-[5px] pl-[2px] whitespace-nowrap">135 RADIATOR GRILL<button aria-label="Edit 135"><svg class="size-[18px]"><use href="#i-edit"/></svg></button></div>
      <a href="#" aria-label="135 Radiator grill" class="mt-[2px] ml-[5px] block h-[120px] w-[169px] border border-[#14a5c4] bg-[#c8eeff]">
        <svg class="size-full" viewBox="1032 105 418 354" preserveAspectRatio="none" fill="none">
          <g transform="translate(1159 204) scale(0.13 0.158)" opacity="0.55"><use href="#grille"/></g>
          <path d="M1230 214h10M1272 253h12M1285 254h10M1338 281h10M1212 375h10M1230 225h10M1230 235h10M1236 270v-10" stroke="#7d99a6" stroke-width="4"/>
          <path d="M1072 445H1430" stroke="#8fa9b5" stroke-width="3"/>
        </svg>
      </a>
    </li>
  </ul>
</main>
</body>
</html>
